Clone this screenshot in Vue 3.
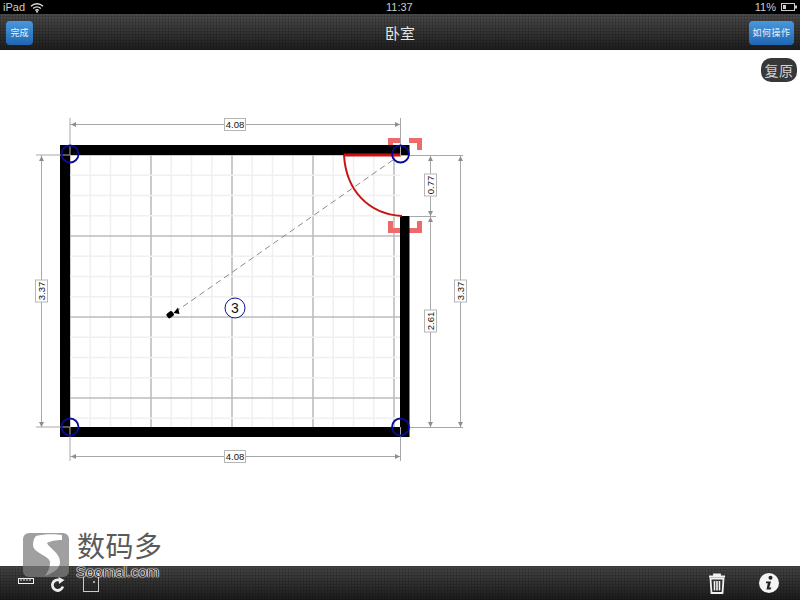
<script setup>
const step = 20.25
const gridX = Array.from({ length: 17 }, (_, i) => ({ pos: 70 + i * step, major: i % 4 === 0 }))
const gridY = Array.from({ length: 14 }, (_, i) => ({ pos: 155 + i * step, major: i % 4 === 0 }))

// plan coordinates are page coordinates, the canvas starts at y=50
const labelsH = [
  { x: 235, y: 124, text: '4.08' },
  { x: 235, y: 456, text: '4.08' }
]
const labelsV = [
  { x: 41, y: 291, text: '3.37' },
  { x: 430, y: 185, text: '0.77' },
  { x: 430, y: 321, text: '2.61' },
  { x: 460, y: 291, text: '3.37' }
]
const corners = [
  [70, 154],
  [400.5, 154],
  [70, 427],
  [400.5, 427]
]
</script>

<template>
  <div class="page">
    <div class="status-bar">
      <div class="status-left">
        <span>iPad</span>
        <svg width="14" height="11" viewBox="0 0 14 11">
          <path d="M1 4.2a8.6 8.6 0 0 1 12 0M3.2 6.4a5.4 5.4 0 0 1 7.6 0M5.3 8.4a2.4 2.4 0 0 1 3.4 0" fill="none" stroke="#ddd" stroke-width="1.4" />
          <circle cx="7" cy="9.8" r="1" fill="#ddd" />
        </svg>
      </div>
      <span class="clock">11:37</span>
      <div class="status-right">
        <span>11%</span>
        <svg width="16" height="8" viewBox="0 0 16 8">
          <rect x="0.5" y="0.5" width="13" height="7" fill="none" stroke="#ccc" />
          <rect x="2" y="2" width="3" height="4" fill="#ccc" />
          <rect x="14" y="2.5" width="2" height="3" fill="#ccc" />
        </svg>
      </div>
    </div>

    <header class="nav-bar">
      <button class="nav-btn">完成</button>
      <h1 class="nav-title">卧室</h1>
      <button class="nav-btn wide">如何操作</button>
    </header>

    <main class="canvas">
      <button class="reset-btn">复原</button>
      <svg class="plan" width="800" height="516" viewBox="0 50 800 516">
        <!-- grid -->
        <line v-for="g in gridX" :key="'x' + g.pos" :x1="g.pos" y1="155" :x2="g.pos" y2="427" :stroke="g.major ? '#bdbdbd' : '#f0f0f0'" :stroke-width="g.major ? 1.6 : 1.5" />
        <line v-for="g in gridY" :key="'y' + g.pos" x1="70" :y1="g.pos" x2="400" :y2="g.pos" :stroke="g.major ? '#bdbdbd' : '#f0f0f0'" :stroke-width="g.major ? 1.6 : 1.5" />

        <!-- door corner brackets -->
        <g fill="none" stroke="#ee6a6a" stroke-width="5">
          <path d="M390.500 150V140.500H400M409 140.500H419.500V150" />
          <path d="M390.500 221V230.500H400M409 230.500H419.500V221" />
        </g>

        <!-- walls -->
        <path d="M60 145H409.500V155H70V427H400V216H409.500V437H60Z" fill="#000" />
        <line x1="344" y1="155" x2="401" y2="155" stroke="#d01010" stroke-width="3" />
        <path d="M344 155C346 190 368 214 402 216" fill="none" stroke="#c81414" stroke-width="2" />

        <!-- dimension lines -->
        <g stroke="#a8a8a8" stroke-width="1" fill="none">
          <path d="M70 118V155M400.500 118V155M70 427V461M400.500 427V461" />
          <path d="M36 155H70M36 427H70M400 155.500H463M410 216.500H436M410 427.500H463" />
          <path d="M70 124.500H400M70 456.500H400M41.500 155V427M430.500 155V216M430.500 216V427M460.500 155V427" />
        </g>
        <g fill="#8e8e8e">
          <path d="M71 124.500l5-2.500v5zM400 124.500l-5-2.500v5zM71 456.500l5-2.500v5zM400 456.500l-5-2.500v5z" />
          <path d="M41.500 156l-2.500 5h5zM41.500 427l-2.500-5h5zM430.500 156l-2.500 5h5zM430.500 216l-2.500-5h5zM430.500 217l-2.500 5h5zM430.500 427l-2.500-5h5zM460.500 156l-2.500 5h5zM460.500 427l-2.500-5h5z" />
        </g>
        <g v-for="l in labelsH" :key="'h' + l.y">
          <rect :x="l.x - 10.500" :y="l.y - 5.500" width="21" height="12" fill="#fff" stroke="#b5b5b5" />
          <text :x="l.x" :y="l.y + 4" class="dim">{{ l.text }}</text>
        </g>
        <g v-for="l in labelsV" :key="'v' + l.x + l.y" :transform="`rotate(-90 ${l.x} ${l.y})`">
          <rect :x="l.x - 11" :y="l.y - 5.500" width="22" height="12" fill="#fff" stroke="#b5b5b5" />
          <text :x="l.x" :y="l.y + 4" class="dim">{{ l.text }}</text>
        </g>

        <!-- corner handles -->
        <circle v-for="c in corners" :key="c.join()" :cx="c[0]" :cy="c[1]" r="8.500" fill="none" stroke="#0a0a96" stroke-width="1.800" />

        <!-- camera direction -->
        <line x1="393" y1="160" x2="178" y2="310" stroke="#8a8a8a" stroke-dasharray="6 4" />
        <path d="M173.500 313L178 307.500L179.500 314Z" fill="#000" />
        <rect x="166.500" y="312" width="7" height="5.500" rx="1.500" transform="rotate(-38 170 314.500)" fill="#000" />
        <circle cx="235" cy="308" r="10" fill="#fff" stroke="#14148c" />
        <text x="235" y="313" class="room-no">3</text>
      </svg>
    </main>

    <footer class="tool-bar">
      <div class="tools">
        <svg class="tool-ruler" width="16" height="6" viewBox="0 0 16 6">
          <rect x="0.500" y="0.500" width="15" height="5" fill="none" stroke="#eee" />
          <path d="M3 1V3M6 1V3M9 1V3M12 1V3" stroke="#eee" />
        </svg>
        <svg class="tool-undo" width="16" height="16" viewBox="0 0 16 16">
          <path d="M12.800 9.500a5.300 5.300 0 1 1-3-6.200" fill="none" stroke="#eee" stroke-width="2.800" />
          <path d="M8.500 0l6 3-5.500 4z" fill="#eee" />
        </svg>
        <svg class="tool-door" width="18" height="19" viewBox="0 0 18 19">
          <rect x="1.500" y="0.500" width="15" height="18" fill="none" stroke="#ccc" />
          <circle cx="12" cy="9" r="1" fill="#ccc" />
        </svg>
      </div>
      <div class="tools right">
        <svg width="18" height="21" viewBox="0 0 18 21">
          <path d="M6 3V1.500H12V3M1 3.500H17" fill="none" stroke="#f2f2f2" stroke-width="1.800" />
          <path d="M2.500 5.500H15.500L14.500 20H3.500Z" fill="none" stroke="#f2f2f2" stroke-width="1.800" />
          <path d="M6.500 8V17.500M9 8V17.500M11.500 8V17.500" stroke="#f2f2f2" stroke-width="1.600" />
        </svg>
        <svg width="20" height="20" viewBox="0 0 20 20">
          <circle cx="10" cy="10" r="10" fill="#f4f4f4" />
          <circle cx="11.500" cy="4.800" r="2" fill="#222" />
          <path d="M7 8.500H12L10.300 14.500H12.500L11.500 16.500H7.500L8.800 10.300H7Z" fill="#222" />
        </svg>
      </div>
    </footer>

    <!-- watermark sits over canvas and toolbar -->
    <div class="watermark">
      <svg class="wm-logo" width="46" height="44" viewBox="0 0 46 44">
        <defs>
          <linearGradient id="wm-bg" x1="0" y1="0" x2="0" y2="1">
            <stop offset="0.75" stop-color="#a0a0a0" />
            <stop offset="0.75" stop-color="#6a6a6a" />
          </linearGradient>
          <linearGradient id="wm-s" gradientUnits="userSpaceOnUse" x1="0" y1="0" x2="0" y2="44">
            <stop offset="0.75" stop-color="#fff" />
            <stop offset="0.75" stop-color="#9a9a9a" />
          </linearGradient>
        </defs>
        <rect width="46" height="44" rx="6" fill="url(#wm-bg)" />
        <path d="M13 3C20 1 32 1 39 2L39 7C33 7 27 8 24 10C26 15 37 20 37 29C37 36 30 40 22 43C25 39 27 34 27 29C27 23 10 20 10 12C10 8 11 5 13 3Z" fill="url(#wm-s)" />
      </svg>
      <div class="wm-text">
        <span class="wm-name">数码多</span>
        <span class="wm-site">Soomal.com</span>
      </div>
    </div>
  </div>
</template>

<style scoped>
.page {
  position: relative;
  display: flex;
  flex-direction: column;
  width: 800px;
  height: 600px;
  overflow: hidden;
  background: #fff;
  font-family: "Liberation Sans", "Noto Sans CJK SC", sans-serif;
}

.status-bar {
  display: flex;
  justify-content: space-between;
  align-items: center;
  position: relative;
  height: 14px;
  padding: 0 3px;
  background: #000;
  color: #ccc;
  font-size: 11px;
}

.status-left,
.status-right {
  display: flex;
  align-items: center;
  gap: 5px;
}

.clock {
  position: absolute;
  left: 386px;
  top: 0;
  line-height: 14px;
}

.nav-bar {
  display: grid;
  grid-template-columns: 1fr auto 1fr;
  align-items: center;
  justify-items: start;
  height: 36px;
  padding: 6px 6px 5px;
  box-sizing: border-box;
  background:
    repeating-linear-gradient(90deg, rgba(0,0,0,0.14) 0 1px, transparent 1px 3px),
    repeating-linear-gradient(0deg, rgba(0,0,0,0.14) 0 1px, transparent 1px 3px),
    linear-gradient(#4a4a4a, #1d1d1d);
}

.nav-title {
  margin: 0;
  color: #e4e4e4;
  font-size: 15px;
  font-weight: 400;
}

.nav-btn {
  width: 27px;
  height: 24px;
  padding: 0;
  border: 0;
  border-radius: 4px;
  background: linear-gradient(#4a97dc, #1f66b2);
  color: #e8f2fb;
  font-family: inherit;
  font-size: 9px;
}

.nav-btn.wide {
  justify-self: end;
  width: 45px;
  letter-spacing: 0.5px;
}

.canvas {
  position: relative;
  flex: 1;
}

.plan {
  display: block;
}

.dim {
  font-size: 9.500px;
  text-anchor: middle;
  fill: #111;
}

.room-no {
  font-size: 14px;
  text-anchor: middle;
  fill: #111;
}

.reset-btn {
  position: absolute;
  top: 8px;
  right: 3px;
  width: 36px;
  height: 24px;
  padding: 0;
  border: 0;
  border-radius: 10px;
  background: #383838;
  color: #d0d0d0;
  font-family: inherit;
  font-size: 14px;
  letter-spacing: 0.500px;
}

.tool-bar {
  display: flex;
  justify-content: space-between;
  align-items: center;
  height: 34px;
  padding: 0 21px 0 18px;
  box-sizing: border-box;
  background:
    repeating-linear-gradient(90deg, rgba(0,0,0,0.14) 0 1px, transparent 1px 3px),
    repeating-linear-gradient(0deg, rgba(0,0,0,0.14) 0 1px, transparent 1px 3px),
    linear-gradient(#454545, #1b1b1b);
}

.tools {
  display: flex;
  align-items: flex-start;
  gap: 16px;
  height: 34px;
}

.tool-ruler {
  margin-top: 12px;
}

.tool-undo {
  margin-top: 11px;
}

.tool-door {
  margin-top: 7px;
}

.tools.right {
  align-items: center;
  gap: 33px;
}

.watermark {
  position: absolute;
  left: 23px;
  top: 533px;
  display: flex;
  gap: 8px;
  pointer-events: none;
}

.wm-logo {
  flex-shrink: 0;
}

.wm-text {
  display: flex;
  flex-direction: column;
}

.wm-name {
  color: #5a5a5a;
  font-size: 28px;
  line-height: 30px;
  letter-spacing: 0.500px;
}

.wm-site {
  margin-left: -1px;
  margin-top: 1px;
  color: #333;
  font-size: 15px;
  line-height: 15px;
  text-shadow: 0 0 1px #fff, 0 0 1px #fff, 0 0 1px #fff, 0 0 2px #fff;
}
</style>
